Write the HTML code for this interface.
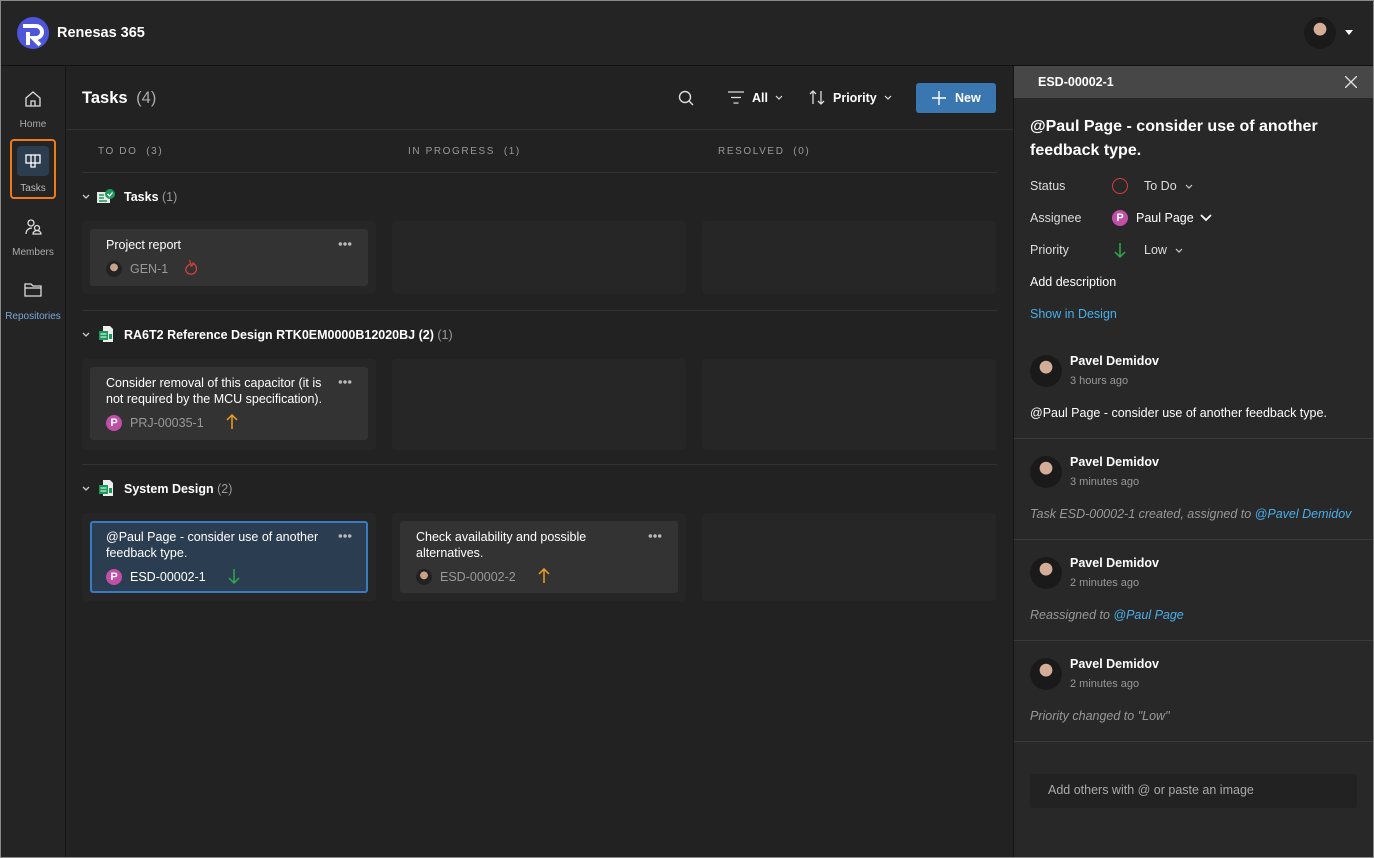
<!DOCTYPE html>
<html><head><meta charset="utf-8"><style>
*{box-sizing:border-box;margin:0;padding:0}
body{width:1374px;height:858px;background:#222;font-family:"Liberation Sans",sans-serif;color:#fff;position:relative;overflow:hidden;font-size:13px}
.abs{position:absolute}
.frame{position:absolute;left:0;top:0;width:1374px;height:858px;border:1px solid #8a8a8a;pointer-events:none;z-index:10}
.hdr{left:0;top:0;width:1374px;height:66px;background:#242424;border-bottom:1px solid #111}
.side{left:0;top:66px;width:66px;height:792px;background:#242424;border-right:1px solid #151515}
.nav{position:absolute;left:0;width:66px;text-align:center;font-size:10px;color:#aaa}
.main{left:66px;top:66px;width:948px;height:792px;background:#222}
.lane{position:absolute;background:#262626;border-radius:4px;width:294px}
.card{position:absolute;background:#333;border-radius:3px;width:278px}
.ct{position:absolute;left:16px;top:8px;font-size:12.5px;line-height:16px;color:#fff;width:225px}
.dots{position:absolute;right:16px;top:13px;width:14px;height:4px;background:radial-gradient(circle,#bbb 1.5px,transparent 2px) 0 0/4.7px 4px repeat-x}
.id{position:absolute;font-size:12.5px;color:#999}
.av{position:absolute;width:16px;height:16px;border-radius:50%;background:radial-gradient(circle at 50% 40%,#c9a08a 0 30%,#222 32%);}
.p{position:absolute;width:16px;height:16px;border-radius:50%;background:#c04fa8;color:#fff;font-size:11px;font-weight:bold;text-align:center;line-height:16px}
.gh{position:absolute;left:16px;font-size:12.5px;font-weight:bold;color:#fff}
.gh span{color:#999;font-weight:normal}
.div{position:absolute;left:16px;width:915px;height:1px;background:#333}
.colh{position:absolute;top:80px;font-size:10px;letter-spacing:1.6px;color:#999}
.rp{left:1014px;top:66px;width:360px;height:792px;background:#282828}
.lbl{position:absolute;left:16px;font-size:12.5px;color:#ddd}
.cm{position:absolute;left:0;width:360px;border-bottom:1px solid #3a3a3a}
.cav{position:absolute;left:16px;width:32px;height:32px;border-radius:50%;background:radial-gradient(circle at 50% 38%,#d4ad98 0 24%,#1a1a1a 26%)}
.cn{position:absolute;left:56px;font-size:12.5px;font-weight:bold}
.ctime{position:absolute;left:56px;font-size:11px;color:#999}
.ctx{position:absolute;left:16px;font-size:12.5px}
.it{font-style:italic;color:#999}
.lnk{color:#4aaeea}
</style></head><body>
<div class="abs hdr">
 <svg class="abs" style="left:16px;top:16px" width="34" height="34" viewBox="0 0 34 34"><circle cx="17" cy="17" r="16" fill="#4d55d8"/><path d="M7 10h13a6 6 0 0 1 0 12h-3l7 7" stroke="#fff" stroke-width="4" fill="none"/><path d="M12 16v13" stroke="#fff" stroke-width="4"/></svg>
 <div class="abs" style="left:57px;top:25px;font-size:14.5px;font-weight:bold">Renesas 365</div>
 <div class="abs" style="left:1304px;top:17px;width:32px;height:32px;border-radius:50%;background:radial-gradient(circle at 50% 38%,#d4ad98 0 24%,#1a1a1a 26%)"></div>
 <div class="abs" style="left:1345px;top:30px;width:0;height:0;border-left:4px solid transparent;border-right:4px solid transparent;border-top:5px solid #fff"></div>
</div>
<div class="abs side">
 <svg class="abs" style="left:24px;top:24px" width="18" height="18" viewBox="0 0 18 18" fill="none" stroke="#ddd" stroke-width="1.3"><path d="M2 8L9 2l7 6v8H2z"/><path d="M7 16v-5h4v5"/></svg>
 <div class="nav" style="top:53px">Home</div>
 <div class="abs" style="left:10px;top:73px;width:46px;height:60px;border:2px solid #f07a1a;border-radius:4px"></div>
 <div class="abs" style="left:17px;top:80px;width:32px;height:30px;background:#2d3d50;border-radius:4px"></div>
 <svg class="abs" style="left:25px;top:88px" width="16" height="14" viewBox="0 0 16 14" fill="none" stroke="#fff" stroke-width="1.3"><rect x="1" y="1" width="14" height="8"/><path d="M6 1v12h4V1"/></svg>
 <div class="nav" style="top:117px;color:#bbb">Tasks</div>
 <svg class="abs" style="left:24px;top:152px" width="18" height="18" viewBox="0 0 18 18" fill="none" stroke="#ddd" stroke-width="1.3"><circle cx="7" cy="5" r="3"/><circle cx="13" cy="10" r="2.5"/><path d="M2 16c0-4 3-6 6-6M9 16c0-2 2-3.5 4-3.5s4 1.5 4 3.5z"/></svg>
 <div class="nav" style="top:181px">Members</div>
 <svg class="abs" style="left:24px;top:216px" width="18" height="16" viewBox="0 0 18 16" fill="none" stroke="#ddd" stroke-width="1.3"><path d="M1 2h6l2 2h8v10H1z"/><path d="M1 6h16"/></svg>
 <div class="nav" style="top:245px;color:#7aa7d8">Repositories</div>
</div>
<div class="abs main">
 <div class="abs" style="left:16px;top:23px;font-size:16.5px;font-weight:bold">Tasks <span style="color:#aaa;font-weight:normal;margin-left:4px">(4)</span></div>
 <svg class="abs" style="left:612px;top:24px" width="16" height="16" viewBox="0 0 16 16" fill="none" stroke="#ddd" stroke-width="1.4"><circle cx="7" cy="7" r="5.5"/><path d="M11 11l4 4"/></svg>
 <svg class="abs" style="left:662px;top:25px" width="16" height="13" viewBox="0 0 16 13" stroke="#ddd" stroke-width="1.3"><path d="M0 1h16M3 6.5h10M5.5 12h5"/></svg>
 <div class="abs" style="left:686px;top:25px;font-size:12.5px;font-weight:bold">All</div>
 <svg class="abs" style="left:709px;top:29px" width="8" height="5" viewBox="0 0 8 5" fill="none" stroke="#ddd" stroke-width="1.2"><path d="M1 1l3 3 3-3"/></svg>
 <svg class="abs" style="left:743px;top:24px" width="16" height="15" viewBox="0 0 16 15" fill="none" stroke="#ddd" stroke-width="1.3"><path d="M4 14V1M1 4l3-3 3 3M12 1v13M9 11l3 3 3-3"/></svg>
 <div class="abs" style="left:767px;top:25px;font-size:12.5px;font-weight:bold">Priority</div>
 <svg class="abs" style="left:818px;top:29px" width="8" height="5" viewBox="0 0 8 5" fill="none" stroke="#ddd" stroke-width="1.2"><path d="M1 1l3 3 3-3"/></svg>
 <div class="abs" style="left:850px;top:17px;width:80px;height:30px;background:#3a77b0;border-radius:3px"></div>
 <svg class="abs" style="left:866px;top:25px" width="14" height="14" stroke="#fff" stroke-width="1.4"><path d="M7 0v14M0 7h14"/></svg>
 <div class="abs" style="left:889px;top:25px;font-size:12.5px;font-weight:bold">New</div>
 <div class="abs" style="left:0;top:63px;width:948px;height:1px;background:#333"></div>
 <div class="colh" style="left:32px">TO DO &nbsp;(3)</div>
 <div class="colh" style="left:342px">IN PROGRESS &nbsp;(1)</div>
 <div class="colh" style="left:652px">RESOLVED &nbsp;(0)</div>
 <div class="div" style="top:106px"></div>

 <svg class="abs" style="left:16px;top:128px" width="8" height="5" fill="none" stroke="#ccc" stroke-width="1.3"><path d="M1 1l3 3 3-3"/></svg>
 <svg class="abs" style="left:31px;top:123px" width="18" height="15" viewBox="0 0 18 15"><rect x="0" y="3" width="13" height="11" fill="#e8e8e8"/><path d="M2 6h5M2 9h5M2 12h8" stroke="#1a9a5a" stroke-width="1.4"/><circle cx="13" cy="5" r="5" fill="#1a9a5a"/><path d="M10.5 5l2 2 3-3.5" stroke="#fff" stroke-width="1.3" fill="none"/></svg>
 <div class="gh" style="left:58px;top:124px">Tasks <span>(1)</span></div>
 <div class="lane" style="left:16px;top:155px;height:73px"></div>
 <div class="lane" style="left:326px;top:155px;height:73px"></div>
 <div class="lane" style="left:636px;top:155px;height:73px"></div>
 <div class="card" style="left:24px;top:163px;height:57px">
  <div class="ct">Project report</div><div class="dots"></div>
  <div class="av" style="left:16px;top:32px"></div>
  <div class="id" style="left:40px;top:33px">GEN-1</div>
  <svg class="abs" style="left:94px;top:30px" width="14" height="18" viewBox="0 0 14 18" fill="none" stroke="#e04040" stroke-width="1.2"><path d="M6 1c-1 3 2 3 1 6 2 0 2-2 2-3 3 2 4 5 3 8a5.5 5.5 0 0 1-10 0C1 9 3 7 6 5"/></svg>
 </div>
 <div class="div" style="top:244px"></div>

 <svg class="abs" style="left:16px;top:266px" width="8" height="5" fill="none" stroke="#ccc" stroke-width="1.3"><path d="M1 1l3 3 3-3"/></svg>
 <svg class="abs" style="left:32px;top:259px" width="16" height="18" viewBox="0 0 16 18"><path d="M5 1h7l3 3v13H5z" fill="#eee"/><rect x="1" y="6" width="9" height="9" fill="#1a9a5a"/><path d="M2.5 9h6M2.5 12h6" stroke="#fff" stroke-width="1"/><rect x="11" y="9" width="3" height="5" fill="#1a9a5a"/></svg>
 <div class="gh" style="left:58px;top:262px">RA6T2 Reference Design RTK0EM0000B12020BJ (2) <span>(1)</span></div>
 <div class="lane" style="left:16px;top:293px;height:91px"></div>
 <div class="lane" style="left:326px;top:293px;height:91px"></div>
 <div class="lane" style="left:636px;top:293px;height:91px"></div>
 <div class="card" style="left:24px;top:301px;height:73px">
  <div class="ct">Consider removal of this capacitor (it is not required by the MCU specification).</div><div class="dots"></div>
  <div class="p" style="left:16px;top:48px">P</div>
  <div class="id" style="left:40px;top:49px">PRJ-00035-1</div>
  <svg class="abs" style="left:136px;top:47px" width="12" height="16" fill="none" stroke="#f0a020" stroke-width="1.5"><path d="M6 15V1M1 6l5-5 5 5"/></svg>
 </div>
 <div class="div" style="top:398px"></div>

 <svg class="abs" style="left:16px;top:420px" width="8" height="5" fill="none" stroke="#ccc" stroke-width="1.3"><path d="M1 1l3 3 3-3"/></svg>
 <svg class="abs" style="left:32px;top:413px" width="16" height="18" viewBox="0 0 16 18"><path d="M5 1h7l3 3v13H5z" fill="#eee"/><rect x="1" y="6" width="9" height="9" fill="#1a9a5a"/><path d="M2.5 9h6M2.5 12h6" stroke="#fff" stroke-width="1"/><rect x="11" y="9" width="3" height="5" fill="#1a9a5a"/></svg>
 <div class="gh" style="left:58px;top:416px">System Design <span>(2)</span></div>
 <div class="lane" style="left:16px;top:447px;height:88px"></div>
 <div class="lane" style="left:326px;top:447px;height:88px"></div>
 <div class="lane" style="left:636px;top:447px;height:88px"></div>
 <div class="card" style="left:24px;top:455px;height:72px;background:#2b3d50;border:2px solid #3a7bc0">
  <div class="ct" style="left:14px;top:6px">@Paul Page - consider use of another feedback type.</div><div class="dots" style="right:14px;top:11px"></div>
  <div class="p" style="left:14px;top:46px">P</div>
  <div class="id" style="left:38px;top:47px;color:#fff">ESD-00002-1</div>
  <svg class="abs" style="left:136px;top:45px" width="12" height="16" fill="none" stroke="#2ea84a" stroke-width="1.5"><path d="M6 1v14M1 10l5 5 5-5"/></svg>
 </div>
 <div class="card" style="left:334px;top:455px;height:72px">
  <div class="ct">Check availability and possible alternatives.</div><div class="dots"></div>
  <div class="av" style="left:16px;top:48px"></div>
  <div class="id" style="left:40px;top:49px">ESD-00002-2</div>
  <svg class="abs" style="left:138px;top:47px" width="12" height="16" fill="none" stroke="#f0a020" stroke-width="1.5"><path d="M6 15V1M1 6l5-5 5 5"/></svg>
 </div>
</div>
<div class="abs" style="left:1013px;top:66px;width:1px;height:792px;background:#151515"></div>
<div class="abs rp">
 <div class="abs" style="left:0;top:0;width:360px;height:32px;background:#474747"></div>
 <div class="abs" style="left:24px;top:9px;font-size:12.5px;font-weight:bold">ESD-00002-1</div>
 <svg class="abs" style="left:331px;top:10px" width="12" height="12" stroke="#ddd" stroke-width="1.4"><path d="M0 0l12 12M12 0L0 12"/></svg>
 <div class="abs" style="left:16px;top:49px;font-size:16px;font-weight:bold;line-height:24px;width:330px">@Paul Page - consider use of another feedback type.</div>
 <div class="lbl" style="top:113px">Status</div>
 <div class="abs" style="left:98px;top:112px;width:16px;height:16px;border-radius:50%;border:1.5px solid #e03a3a"></div>
 <div class="abs" style="left:130px;top:113px;font-size:12.5px;color:#ddd">To Do</div>
 <svg class="abs" style="left:171px;top:118px" width="8" height="5" fill="none" stroke="#ccc" stroke-width="1.2"><path d="M1 1l3 3 3-3"/></svg>
 <div class="lbl" style="top:145px">Assignee</div>
 <div class="p" style="left:98px;top:144px">P</div>
 <div class="abs" style="left:122px;top:145px;font-size:12.5px">Paul Page</div>
 <svg class="abs" style="left:186px;top:148px" width="12" height="8" fill="none" stroke="#fff" stroke-width="1.8"><path d="M1 1l5 5 5-5"/></svg>
 <div class="lbl" style="top:177px">Priority</div>
 <svg class="abs" style="left:100px;top:176px" width="12" height="16" fill="none" stroke="#2ea84a" stroke-width="1.5"><path d="M6 1v14M1 10l5 5 5-5"/></svg>
 <div class="abs" style="left:130px;top:177px;font-size:12.5px;color:#ddd">Low</div>
 <svg class="abs" style="left:161px;top:182px" width="8" height="5" fill="none" stroke="#ccc" stroke-width="1.2"><path d="M1 1l3 3 3-3"/></svg>
 <div class="lbl" style="top:209px;color:#fff">Add description</div>
 <div class="lbl" style="top:241px;color:#4aaeea">Show in Design</div>

 <div class="cm" style="top:272px;height:101px">
  <div class="cav" style="top:17px"></div><div class="cn" style="top:16px">Pavel Demidov</div><div class="ctime" style="top:37px">3 hours ago</div>
  <div class="ctx" style="top:68px">@Paul Page - consider use of another feedback type.</div>
 </div>
 <div class="cm" style="top:373px;height:101px">
  <div class="cav" style="top:17px"></div><div class="cn" style="top:16px">Pavel Demidov</div><div class="ctime" style="top:37px">3 minutes ago</div>
  <div class="ctx it" style="top:68px">Task ESD-00002-1 created, assigned to <span class="lnk">@Pavel Demidov</span></div>
 </div>
 <div class="cm" style="top:474px;height:101px">
  <div class="cav" style="top:17px"></div><div class="cn" style="top:16px">Pavel Demidov</div><div class="ctime" style="top:37px">2 minutes ago</div>
  <div class="ctx it" style="top:68px">Reassigned to <span class="lnk">@Paul Page</span></div>
 </div>
 <div class="cm" style="top:575px;height:101px">
  <div class="cav" style="top:17px"></div><div class="cn" style="top:16px">Pavel Demidov</div><div class="ctime" style="top:37px">2 minutes ago</div>
  <div class="ctx it" style="top:68px">Priority changed to "Low"</div>
 </div>
 <div class="abs" style="left:16px;top:708px;width:327px;height:34px;background:#222;border-radius:3px"></div>
 <div class="abs" style="left:34px;top:717px;font-size:12.5px;color:#aaa">Add others with @ or paste an image</div>
</div>
<div class="frame"></div>
</body></html>
